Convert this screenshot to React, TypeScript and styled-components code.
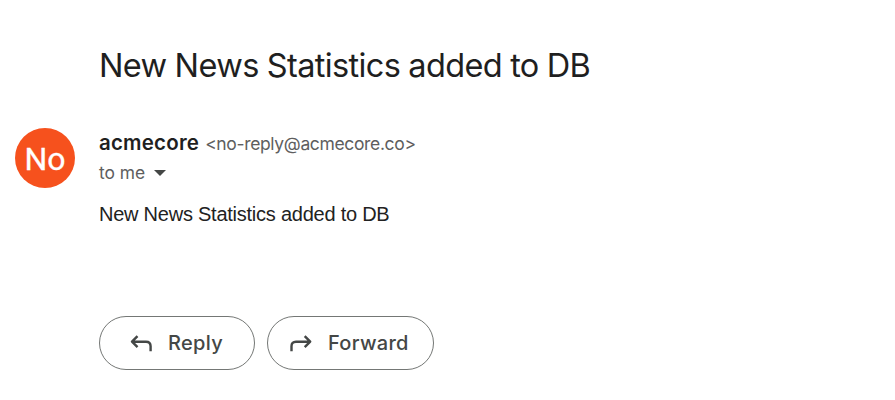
import React from "react";
import styled, { createGlobalStyle } from "styled-components";

const Global = createGlobalStyle`
  body { margin: 0; background: #fff; }
  * { box-sizing: border-box; }
`;
const Page = styled.main`
  width: 895px; height: 400px; overflow: hidden;
  font-family: Roboto, sans-serif; color: #1f1f1f;
`;
const Subject = styled.h1`
  margin: 45px 0 0 99px; font: 400 32.5px/42px Inter, sans-serif; letter-spacing: -0.62px;
  word-spacing: -0.5px; white-space: nowrap;
`;
const Message = styled.section`
  display: grid; grid-template-columns: 84px 1fr; padding-left: 15px; margin-top: 41px;
`;
const Avatar = styled.div`
  width: 60px; height: 60px; border-radius: 50%; background: #f6511d; color: #fff;
  display: flex; align-items: center; justify-content: center;
  font-size: 32px; line-height: 60px; padding-top: 2px;
  -webkit-text-stroke: 0.3px #fff;
`;
const Body = styled.div`display: flex; flex-direction: column;`;
const Sender = styled.div`
  display: flex; align-items: baseline; gap: 6px; height: 30px; line-height: 30px; white-space: nowrap;
`;
const Name = styled.span`font: 600 20.5px/30px Inter, sans-serif; letter-spacing: 0.2px;`;
const Address = styled.span`font: 400 17.5px/29px Inter, sans-serif; color: #5e5e5e; letter-spacing: -0.35px;`;
const Recipient = styled.div`
  display: flex; align-items: center; gap: 9px; height: 30px; color: #5e5e5e;
  font: 400 17.4px/30px Inter, sans-serif;
`;
const Text = styled.p`margin: 12px 0 0; font: 400 20px/28px "Liberation Sans", sans-serif; letter-spacing: -0.24px; color: #222;`;
const Actions = styled.div`display: flex; gap: 12px; margin: 88px 0 0 99px;`;
const Action = styled.button<{ $width: number; $pad: number; $gap: number }>`
  width: ${p => p.$width}px; height: 54px; padding: 0 0 0 ${p => p.$pad}px;
  display: flex; align-items: center; gap: ${p => p.$gap}px;
  border: 1px solid #747775; border-radius: 27px; background: #fff;
  font: 500 20px/52px Inter, sans-serif; letter-spacing: 0.3px; color: #444746;
`;

export default function App() {
  return <><Global /><Page>
    <Subject>New News Statistics added to DB</Subject>
    <Message>
      <Avatar>No</Avatar>
      <Body>
        <Sender><Name>acmecore</Name><Address>&lt;no-reply@acmecore.co&gt;</Address></Sender>
        <Recipient>to me <svg width="12" height="6"><path d="M0 0h12L6 6z" fill="#444746" /></svg></Recipient>
        <Text>New News Statistics added to DB</Text>
      </Body>
    </Message>
    <Actions>
      <Action $width={156} $pad={30} $gap={15}>
        <svg width="23" height="18" viewBox="0 0 23 18" fill="none" stroke="#444746" strokeWidth="2.4" strokeLinejoin="round"><path d="M7.5 2.2 2 7.7l5.5 5.5M2 7.7h14q4.6 0 4.6 4.6v5" /></svg>Reply
      </Action>
      <Action $width={167} $pad={22} $gap={15}>
        <svg width="23" height="18" viewBox="0 0 23 18" fill="none" stroke="#444746" strokeWidth="2.4" strokeLinejoin="round"><path d="m14.7 2.2 5.5 5.5-5.5 5.5M20.2 7.7H6q-4.5 0-4.5 4.6v5" /></svg>Forward
      </Action>
    </Actions>
  </Page></>;
}
